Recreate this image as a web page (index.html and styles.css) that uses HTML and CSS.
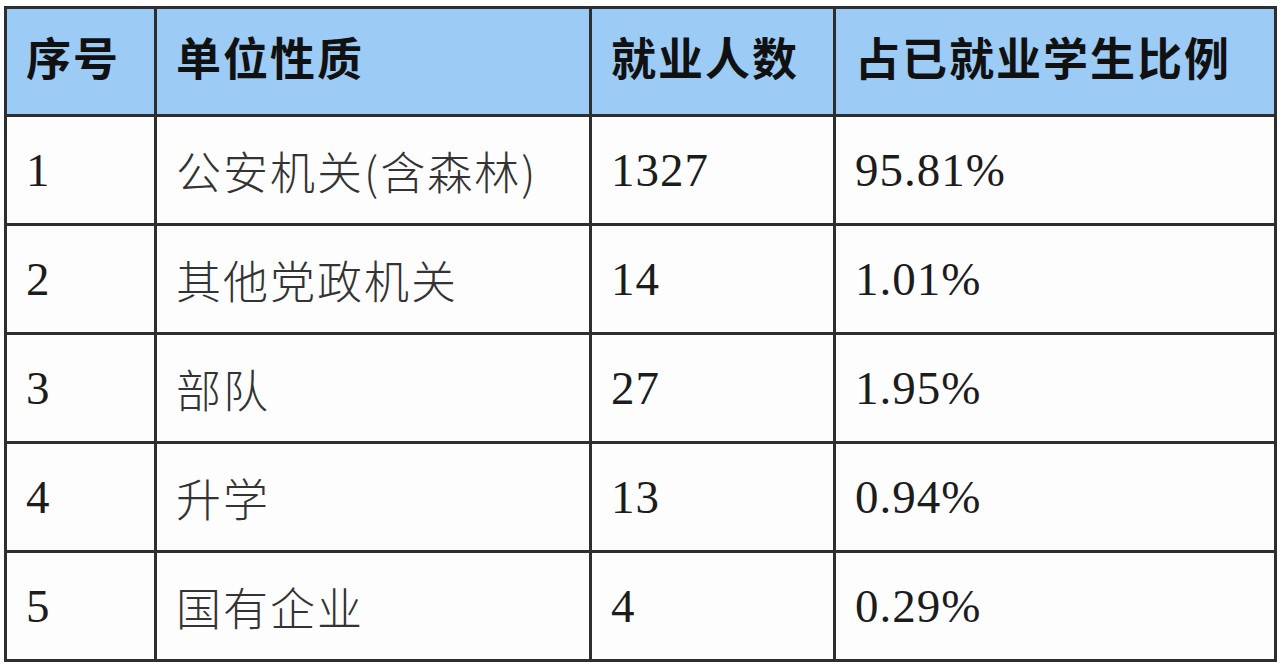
FILE: index.html
```html
<!DOCTYPE html>
<html lang="zh-CN">
<head>
<meta charset="utf-8">
<title>就业单位性质</title>
<link rel="stylesheet" href="styles.css">
</head>
<body>
<table class="stats">
  <colgroup>
    <col class="c1"><col class="c2"><col class="c3"><col class="c4">
  </colgroup>
  <thead>
    <tr><th>序号</th><th>单位性质</th><th>就业人数</th><th>占已就业学生比例</th></tr>
  </thead>
  <tbody>
    <tr><td>1</td><td class="cjk">公安机关(含森林)</td><td>1327</td><td>95.81%</td></tr>
    <tr><td>2</td><td class="cjk">其他党政机关</td><td>14</td><td>1.01%</td></tr>
    <tr><td>3</td><td class="cjk">部队</td><td>27</td><td>1.95%</td></tr>
    <tr><td>4</td><td class="cjk">升学</td><td>13</td><td>0.94%</td></tr>
    <tr><td>5</td><td class="cjk">国有企业</td><td>4</td><td>0.29%</td></tr>
  </tbody>
</table>
</body>
</html>
```
FILE: styles.css
```css
html, body {
  margin: 0;
  padding: 0;
  background: #ffffff;
}
body {
  padding: 6px 0 0 4px;
}
.stats {
  border-collapse: collapse;
  width: 1270px;
  table-layout: fixed;
  font-family: "Liberation Serif", "Noto Sans CJK SC", serif;
  color: #1c1c1c;
}
.c1 { width: 150px; }
.c2 { width: 435px; }
.c3 { width: 244px; }
.c4 { width: 441px; }
.stats th, .stats td {
  border: 3px solid #2e2e2e;
  text-align: left;
  padding: 0 0 0 19px;
  vertical-align: middle;
}
.stats th {
  height: 95px;
  padding-bottom: 10px;
  background: #9ccbf5;
  font-family: "Noto Sans CJK SC", sans-serif;
  font-weight: 700;
  font-size: 45px;
  color: #111;
  letter-spacing: 2px;
}
.stats td {
  height: 106px;
  font-size: 47px;
  letter-spacing: 1px;
  background: #fdfdfe;
}
.stats td.cjk {
  font-family: "Noto Sans CJK SC", sans-serif;
  font-weight: 300;
  font-size: 45px;
  color: #333;
  letter-spacing: 2px;
}
```
